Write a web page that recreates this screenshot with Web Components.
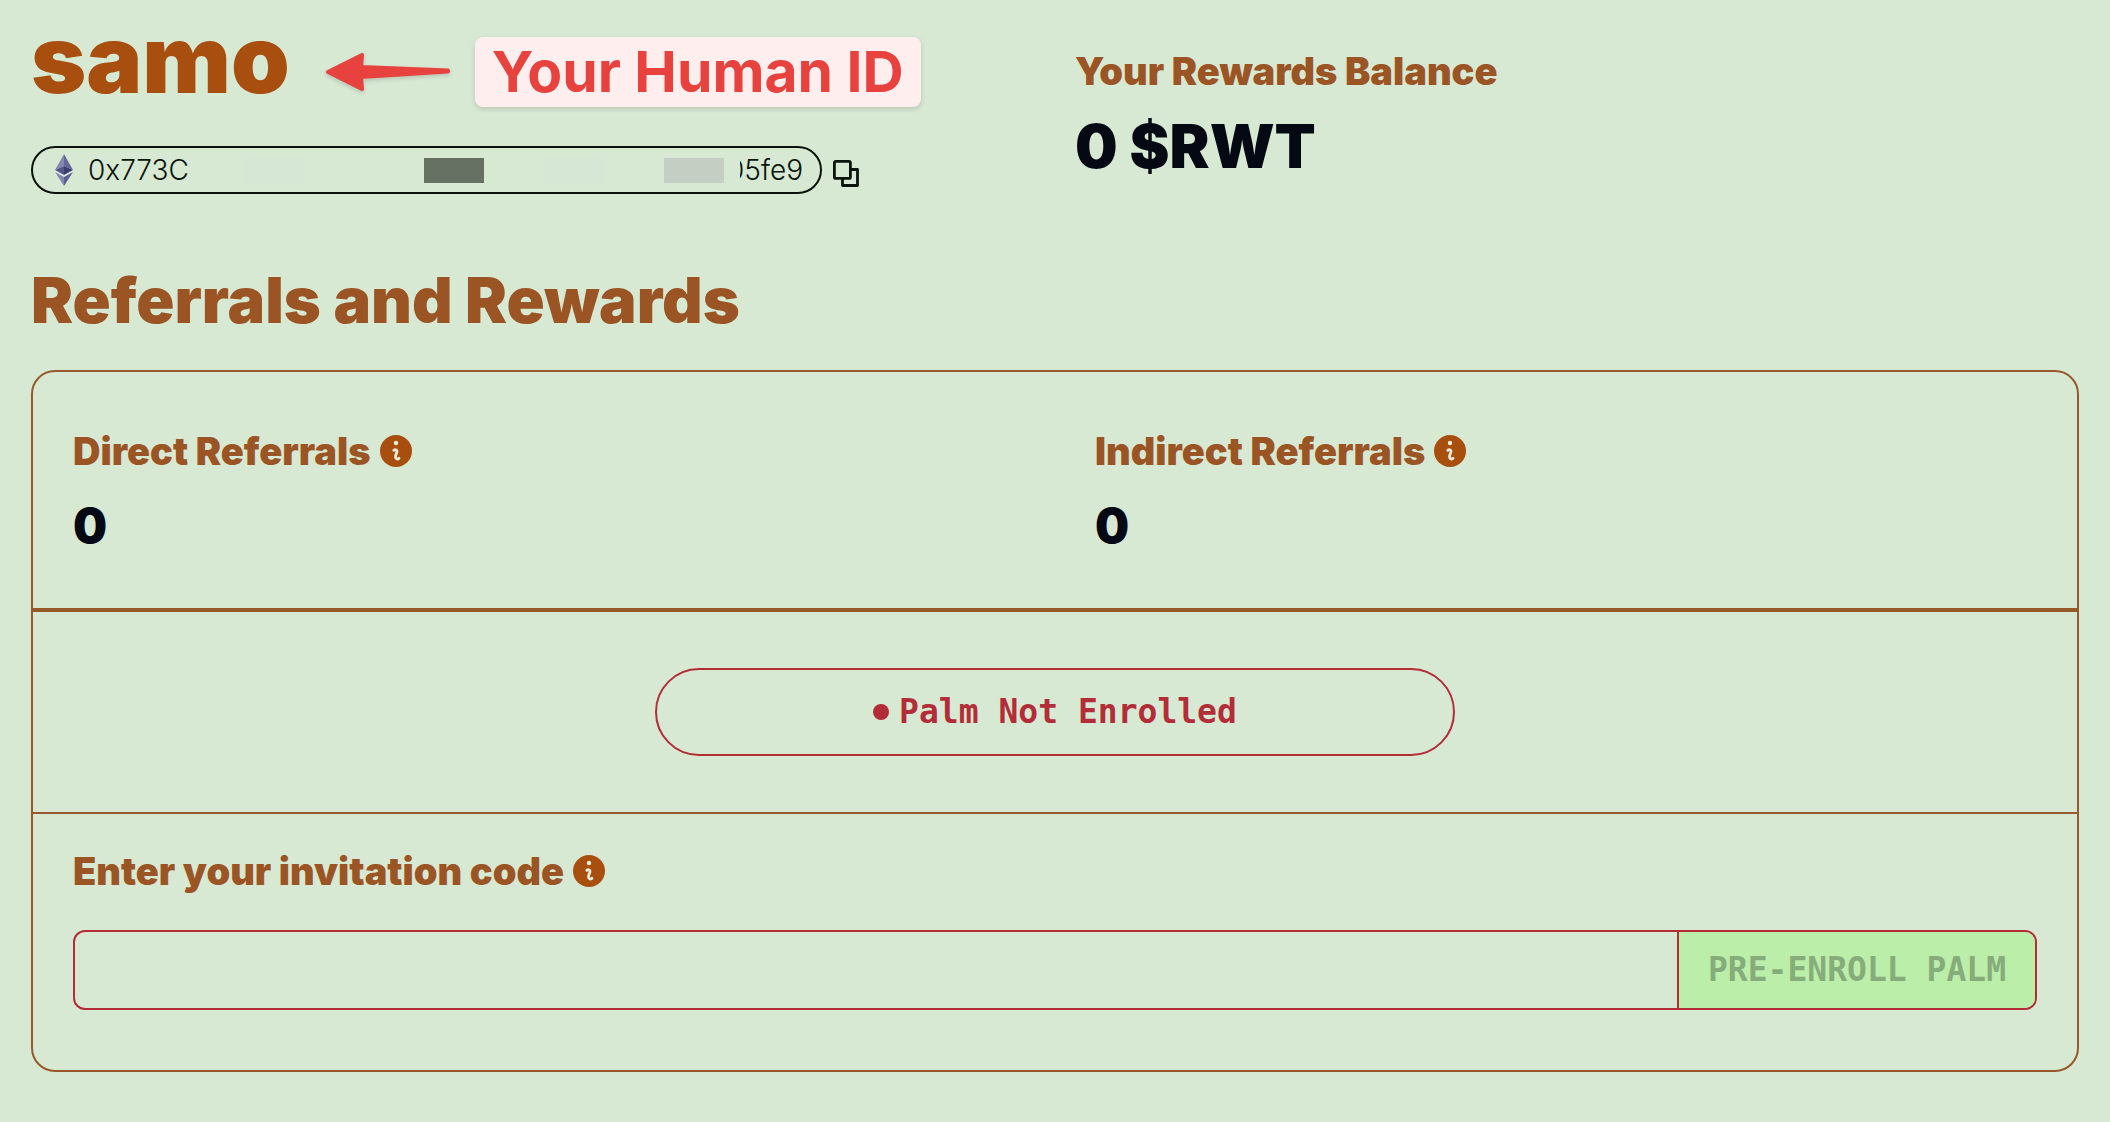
<!DOCTYPE html>
<html lang="en">
<head>
<meta charset="utf-8">
<title>Referrals and Rewards</title>
<style>
  body {
    margin: 0;
    background: #d7e8d3;
    font-family: Inter, "Liberation Sans", sans-serif;
    color: #050914;
    --brown: #9b5524;
    --rust: #a84f0f;
    --line: #97592a;
    --red: #b32d38;
    --mono: "DejaVu Sans Mono", monospace;
  }
</style>
</head>
<body>
<rewards-page></rewards-page>

<script>
class InfoIcon extends HTMLElement {
  constructor() {
    super();
    this.attachShadow({ mode: "open" });
    this.shadowRoot.innerHTML = `
      <style>
        :host { display: block; flex: none; width: 32px; height: 32px; }
        svg { display: block; }
      </style>
      <svg width="32" height="32" viewBox="0 0 32 32" aria-hidden="true">
        <circle cx="16" cy="16" r="16" fill="#a84f0f"/>
        <circle cx="16" cy="8" r="2.200" fill="#e9edda"/>
        <path d="M13.800 15.300C15 14.300 17 14.600 17 16.300 17 18.500 15.300 19.500 15.500 22 15.700 24.300 17.600 24.400 19 23.300" fill="none" stroke="#e9edda" stroke-width="2.800" stroke-linecap="round" stroke-linejoin="round"/>
      </svg>
    `;
  }
}
customElements.define("info-icon", InfoIcon);

class HumanId extends HTMLElement {
  constructor() {
    super();
    this.attachShadow({ mode: "open" });
    this.shadowRoot.innerHTML = `
      <style>
        :host { display: flex; align-items: flex-start; }
        h1 { margin: 0; font-size: 94px; line-height: 44px; font-weight: 900; color: var(--rust); }
        svg { flex: none; align-self: center; margin: 0 24px 0 36px; overflow: visible; filter: drop-shadow(0 2px 2px rgba(0, 0, 0, .15)); }
        .note {
          padding: 0 17px;
          border-radius: 8px;
          background: #feeeee;
          box-shadow: 0 2px 5px rgba(0, 0, 0, .15);
          color: #e8423f;
          font-size: 57px;
          line-height: 70px;
          font-weight: 700;
          white-space: nowrap;
        }
      </style>
      <h1><slot></slot></h1>
      <svg width="125" height="40" viewBox="0 0 125 40" aria-hidden="true">
        <path d="M2 20 36 3 35 15 122 18.500 122 19.500 35 25 36 37Z" fill="#e8423f" stroke="#e8423f" stroke-width="4" stroke-linejoin="round"/>
      </svg>
      <span class="note"><slot name="note"></slot></span>
    `;
  }
}
customElements.define("human-id", HumanId);

class WalletAddress extends HTMLElement {
  constructor() {
    super();
    this.attachShadow({ mode: "open" });
    this.shadowRoot.innerHTML = `
      <style>
        :host { display: flex; align-items: flex-end; gap: 11px; }
        .pill {
          box-sizing: border-box;
          display: flex;
          align-items: center;
          width: 100%;
          max-width: 791px;
          height: 48px;
          padding: 0 17px 0 21px;
          border: 2px solid #0b140c;
          border-radius: 24px;
          color: #0b140c;
          font-size: 28px;
          line-height: 32px;
          font-weight: 300;
        }
        .eth { flex: none; margin-right: 14px; }
        .start { width: 102px; overflow: hidden; }
        .cut { display: flex; justify-content: flex-end; width: 4px; overflow: hidden; }
        .mask { flex: 1; display: flex; justify-content: flex-end; padding-right: 16px; }
        .mask i { width: 60px; height: 25px; }
        .mask .tint { background: #d6e7d6; }
        .mask .dark { background: #667163; }
        .mask .grey { background: #c4cec2; }
        button { padding: 0 0 7px; border: 0; background: none; cursor: pointer; }
        svg { display: block; }
      </style>
      <div class="pill">
        <svg class="eth" width="20" height="32" viewBox="0 0 20 32" aria-hidden="true">
          <path d="M10 0 1 16 10 12Z" fill="#8587b0"/>
          <path d="M10 0 19 16 10 12Z" fill="#65679b"/>
          <path d="M1 16 10 12 10 21Z" fill="#55578a"/>
          <path d="M19 16 10 12 10 21Z" fill="#3d3e70"/>
          <path d="M1 18 10 23 10 32Z" fill="#8587b0"/>
          <path d="M19 18 10 23 10 32Z" fill="#5d5f93"/>
          <path d="M1 17 10 22 19 17" fill="none" stroke="#e3e9ee" stroke-width="1"/>
        </svg>
        <span class="start"><slot name="start"></slot></span>
        <span class="mask"><i class="tint"></i><i></i><i></i><i class="dark"></i><i></i><i class="tint"></i><i></i><i class="grey"></i></span>
        <span class="cut"><slot name="cut"></slot></span>
        <span><slot name="end"></slot></span>
      </div>
      <button type="button" aria-label="Copy address">
        <svg width="26" height="27" viewBox="0 0 26 27" fill="none" stroke="#0b140c" stroke-width="2.800" stroke-linejoin="round">
          <rect x="1.400" y="1.400" width="16" height="17" rx="1.500"/>
          <path d="M17.500 9.500H24.500V25.500H9.500V19"/>
        </svg>
      </button>
    `;
  }
}
customElements.define("wallet-address", WalletAddress);

// Label over a figure, size="large" is the balance in the header
class StatItem extends HTMLElement {
  constructor() {
    super();
    this.attachShadow({ mode: "open" });
    this.shadowRoot.innerHTML = `
      <style>
        :host { display: flex; flex-direction: column; gap: 27px; }
        .label { display: flex; align-items: center; gap: 9px; }
        h3 { margin: 0; font-size: 38px; line-height: 40px; font-weight: 900; color: var(--brown); }
        p { margin: 0; font-size: 48px; line-height: 56px; font-weight: 900; }
        :host([size="large"]) p { font-size: 60px; }
      </style>
      <div class="label"><h3><slot name="label"></slot></h3><slot name="icon"></slot></div>
      <p><slot></slot></p>
    `;
  }
}
customElements.define("stat-item", StatItem);

class StatusPill extends HTMLElement {
  constructor() {
    super();
    this.attachShadow({ mode: "open" });
    this.shadowRoot.innerHTML = `
      <style>
        :host {
          box-sizing: border-box;
          display: flex;
          align-items: center;
          justify-content: center;
          gap: 10px;
          width: 100%;
          max-width: 800px;
          height: 88px;
          border: 2px solid var(--red);
          border-radius: 44px;
          color: var(--red);
          font: 700 33px/40px var(--mono);
        }
        .dot { width: 16px; height: 16px; border-radius: 50%; background: currentColor; }
      </style>
      <span class="dot"></span>
      <span><slot></slot></span>
    `;
  }
}
customElements.define("status-pill", StatusPill);

class InvitationForm extends HTMLElement {
  constructor() {
    super();
    this.attachShadow({ mode: "open" });
    this.shadowRoot.innerHTML = `
      <style>
        :host { display: block; }
        form { display: flex; flex-direction: column; gap: 39px; }
        .label { display: flex; align-items: center; gap: 9px; }
        label { font-size: 38px; line-height: 40px; font-weight: 900; color: var(--brown); }
        .field {
          display: flex;
          height: 76px;
          border: 2px solid var(--red);
          border-radius: 12px;
          overflow: hidden;
        }
        input {
          flex: 1;
          min-width: 0;
          padding: 0 24px;
          border: 0;
          outline: 0;
          background: none;
          font: 400 33px/40px var(--mono);
        }
        button {
          padding: 0 29px;
          border: 0;
          border-left: 2px solid var(--red);
          background: #bbeea8;
          color: #87ac7b;
          font: 700 33px/40px var(--mono);
        }
      </style>
      <form>
        <div class="label"><label for="code">Enter your invitation code</label><info-icon></info-icon></div>
        <div class="field">
          <input id="code" type="text">
          <button type="submit" disabled>PRE-ENROLL PALM</button>
        </div>
      </form>
    `;
  }
  connectedCallback() {
    this._input = this.shadowRoot.querySelector("input");
    this._input.addEventListener("input", this._toggleButton.bind(this));
  }
  _toggleButton() {
    this.shadowRoot.querySelector("button").disabled = !this._input.value;
  }
}
customElements.define("invitation-form", InvitationForm);

class RewardsPage extends HTMLElement {
  constructor() {
    super();
    this.attachShadow({ mode: "open" });
    this.shadowRoot.innerHTML = `
      <style>
        :host { display: block; padding: 37px 31px 50px; }
        header { display: grid; grid-template-columns: 1fr 1fr; gap: 40px; }
        .user { display: flex; flex-direction: column; gap: 39px; min-width: 0; }
        .balance { padding-top: 14px; }
        h2 { margin: 76px 0 40px; font-size: 63px; line-height: 60px; font-weight: 900; color: var(--brown); }
        .card { border: 2px solid var(--line); border-radius: 24px; }
        .stats {
          display: grid;
          grid-template-columns: 1fr 1fr;
          gap: 80px;
          padding: 59px 40px 54px;
          border-bottom: 4px solid var(--line);
        }
        .status { display: flex; justify-content: center; padding: 56px 40px; border-bottom: 2px solid var(--line); }
        .invite { padding: 37px 40px 60px; }
      </style>
      <header>
        <div class="user">
          <human-id>samo<span slot="note">Your Human ID</span></human-id>
          <wallet-address>
            <span slot="start">0x773C</span>
            <span slot="cut">0</span>
            <span slot="end">5fe9</span>
          </wallet-address>
        </div>
        <stat-item class="balance" size="large"><span slot="label">Your Rewards Balance</span>0 $RWT</stat-item>
      </header>
      <main>
        <h2>Referrals and Rewards</h2>
        <div class="card">
          <section class="stats">
            <stat-item><span slot="label">Direct Referrals</span><info-icon slot="icon"></info-icon>0</stat-item>
            <stat-item><span slot="label">Indirect Referrals</span><info-icon slot="icon"></info-icon>0</stat-item>
          </section>
          <section class="status"><status-pill>Palm Not Enrolled</status-pill></section>
          <section class="invite"><invitation-form></invitation-form></section>
        </div>
      </main>
    `;
  }
}
customElements.define("rewards-page", RewardsPage);
</script>
</body>
</html>
